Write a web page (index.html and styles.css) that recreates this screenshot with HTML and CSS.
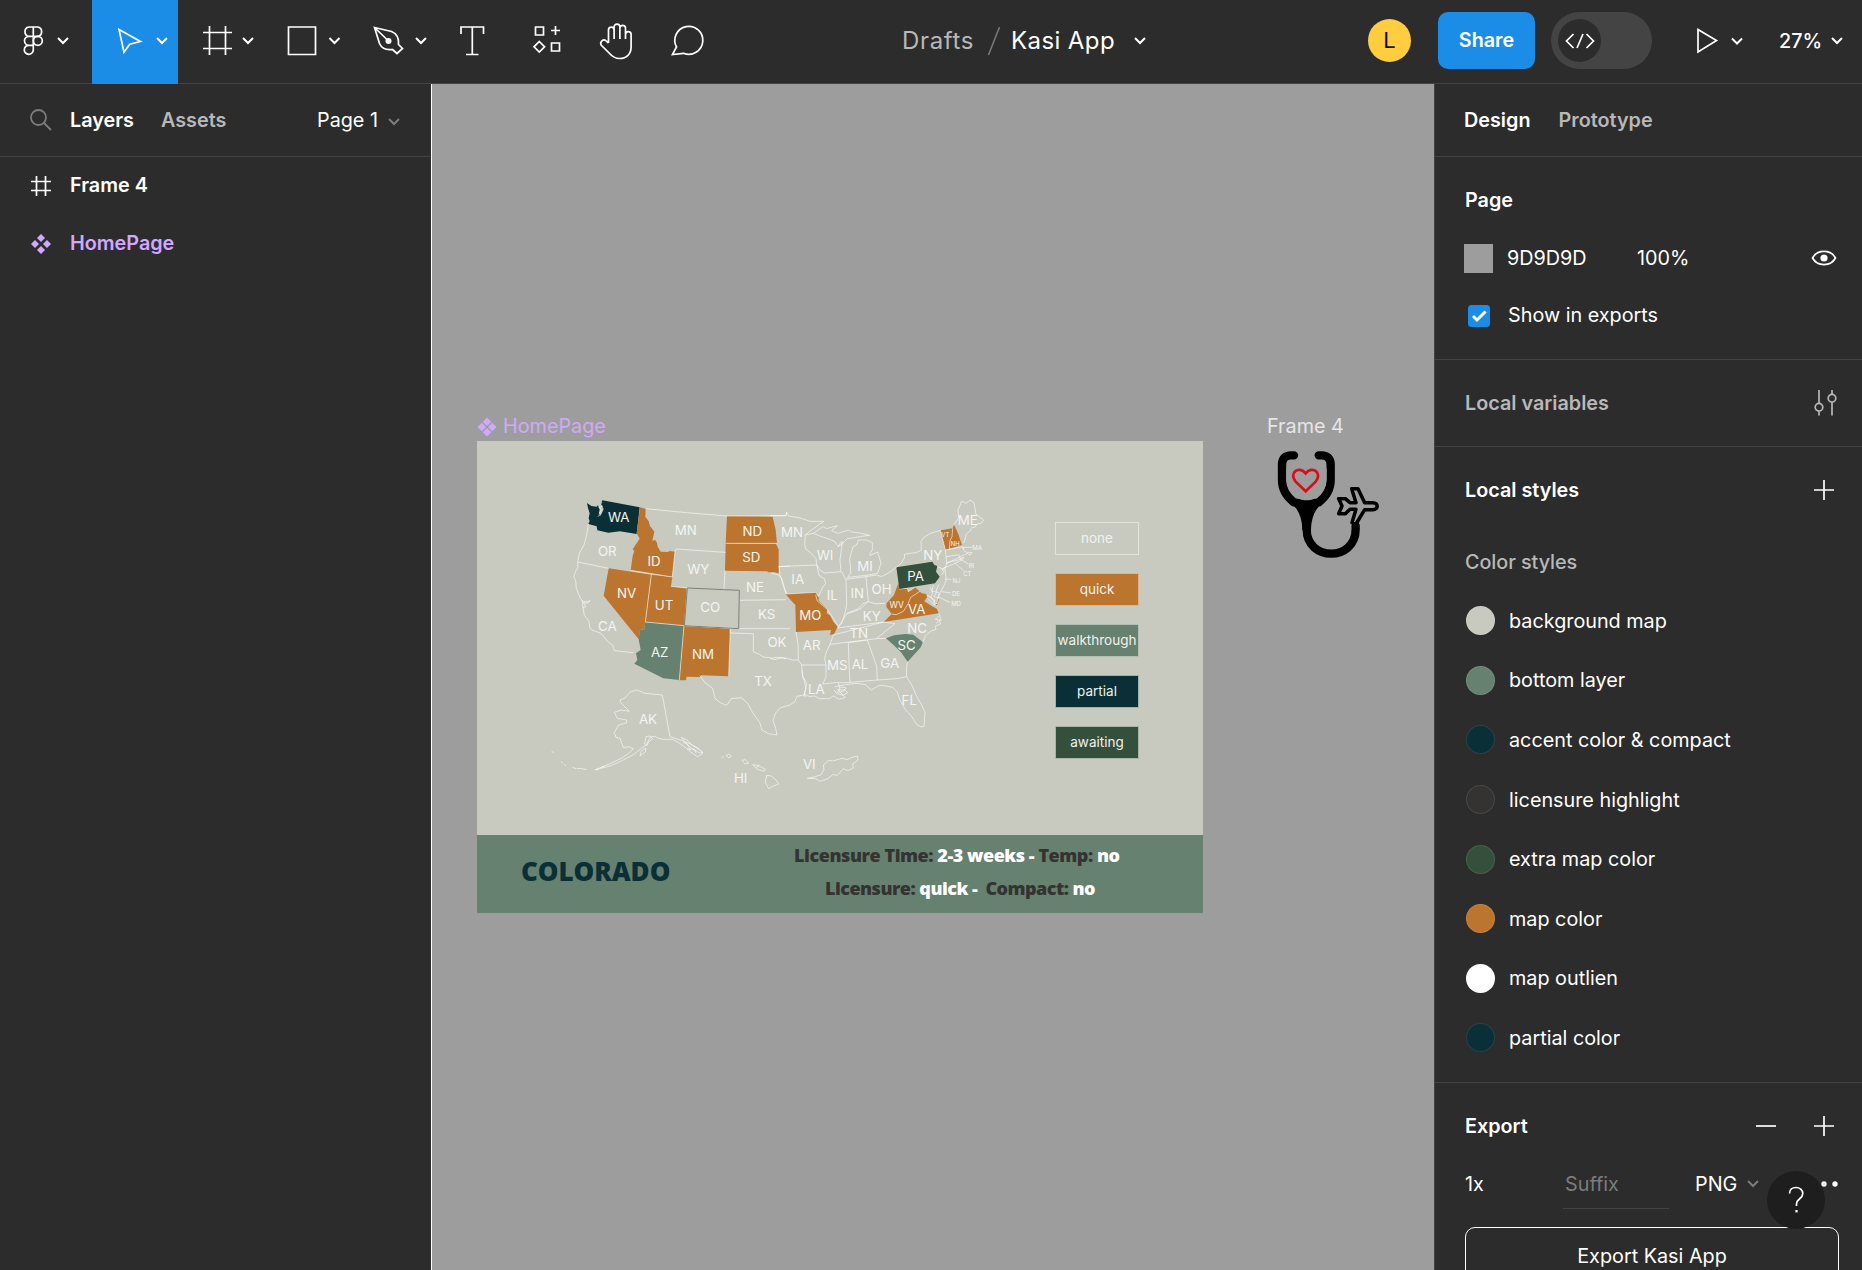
FILE: index.html
```html
<!DOCTYPE html>
<html lang="en">
<head>
<meta charset="utf-8">
<title>Kasi App</title>
<link rel="stylesheet" href="styles.css">
</head>
<body>
<div class="app">
  <header class="toolbar">
    <div class="tools">
      <svg class="tool" width="92" height="84" viewBox="0 0 92 84"><path d="M33.3 27H29a4.7 4.7 0 0 0 0 9.300h4.300zM33.300 27h4.300a4.700 4.700 0 0 1 0 9.300h-4.300zM33.300 36.300H29a4.500 4.500 0 0 0 0 9h4.300zM33.300 45.300H29a4.500 4.500 0 1 0 4.300 4.500z"/><circle cx="37.800" cy="40.800" r="4.500"/><path class="chev" d="M58 38l5 5 5-5"/></svg>
      <svg class="tool active" width="86" height="84" viewBox="92 0 86 84"><path d="M119 29.500l21.500 12-10.800 2.800-5.700 8z"/><path class="chev" d="M157 38l5 5 5-5"/></svg>
      <svg class="tool" width="86" height="84" viewBox="178 0 86 84"><path d="M209.500 26v29M225.500 26v29M203 32.500h29M203 48.500h29"/><path class="chev" d="M243 38l5 5 5-5"/></svg>
      <svg class="tool" width="86" height="84" viewBox="264 0 86 84"><path d="M288.500 27h27v27.500h-27z"/><path class="chev" d="M329.500 38l5 5 5-5"/></svg>
      <svg class="tool" width="87" height="84" viewBox="350 0 87 84"><path d="M374.500 27.500l17 4c5 2 7.500 7 7 13l4 4-5.500 5-4.500-4c-6 .8-11-1.500-13-6zM374.500 27.500l14 13.500"/><circle cx="388.500" cy="41" r="2.200" fill="#fff"/><path class="chev" d="M416 38l5 5 5-5"/></svg>
      <svg class="tool" width="72" height="84" viewBox="437 0 72 84"><path d="M461 34v-7h22.500v7M472.300 27v27.500M466 54.500h12.500"/></svg>
      <svg class="tool" width="74" height="84" viewBox="509 0 74 84"><path d="M535.500 27h8v8h-8zM551.500 43h8v8h-8zM555.500 26v9M551 30.500h9M539.300 41.500l5.300 5.300-5.300 5.300-5.300-5.300z"/></svg>
      <svg class="tool" width="68" height="84" viewBox="583 0 68 84"><path d="M608.500 43V30a2.800 2.800 0 0 1 5.600 0v9V27a2.900 2.900 0 0 1 5.800 0v12V27.500a2.900 2.900 0 0 1 5.600 0V39v-4.500a2.800 2.800 0 0 1 5.600 0V47c0 7-4.500 11.500-11.500 11.500-5 0-7.500-2-10.500-5.500l-8-8c-1.500-3 2-6.500 5-4.200l2.400 2.200"/></svg>
      <svg class="tool" width="74" height="84" viewBox="651 0 74 84"><path d="M672.500 54.500l4-7.500a14 14 0 1 1 7 6.300z"/></svg>
    </div>
    <div class="title"><span class="muted">Drafts</span><svg width="14" height="30" viewBox="0 0 14 30"><path d="M1.500 29L12.500 1" fill="none" stroke="#777" stroke-width="1.600"/></svg><span>Kasi App</span><svg class="ico" width="14" height="10" viewBox="0 0 14 10"><path class="chev" d="M2 2l5 5 5-5"/></svg></div>
    <div class="avatar">L</div>
    <div class="share">Share</div>
    <div class="toggle"><div class="knob"><svg class="ico" width="30" height="20" viewBox="0 0 30 20"><path d="M8.500 3L1.500 10l7 7M21.500 3l7 7-7 7M18 3l-6 14"/></svg></div></div>
    <svg class="ico play" width="60" height="30" viewBox="1690 26 60 30"><path d="M1698 29.500v22.500l18.500-11.500z"/><path class="chev" d="M1732 38.500l5 5 5-5"/></svg>
    <div class="zoom">27%</div>
    <svg class="ico" width="14" height="10" viewBox="0 0 14 10"><path class="chev" d="M2 2l5 5 5-5"/></svg>
  </header>

  <div class="main">
    <aside class="left">
      <div class="tabs">
        <svg class="search" width="22" height="22" viewBox="0 0 22 22"><circle cx="8.500" cy="8.500" r="7.500"/><path d="M14 14l7 7"/></svg>
        <b class="t-layers">Layers</b><b class="muted">Assets</b>
        <span class="pg">Page 1</span>
        <svg class="ico dim" width="14" height="10" viewBox="0 0 14 10"><path class="chev" d="M2 2l5 5 5-5"/></svg>
      </div>
      <div class="layer"><svg class="ico" width="22" height="22" viewBox="0 0 22 22"><path d="M6.500 1v20M15.500 1v20M1 6.500h20M1 15.500h20"/></svg><b>Frame 4</b></div>
      <div class="layer comp"><svg width="22" height="22" viewBox="-11 -11 22 22"><path d="M0-10l4 4-4 4-4-4zM0 2l4 4-4 4-4-4zM-6-4l4 4-4 4-4-4zM6-4l4 4-4 4-4-4z" fill="#d1a8ff"/></svg><b>HomePage</b></div>
    </aside>

    <main class="canvas">
      <section class="board home">
        <div class="label"><svg width="20" height="20" viewBox="-10.500 -10.500 21 21"><path d="M0-10l4.500 4.500L0-1l-4.500-4.500zM0 1l4.500 4.500L0 10l-4.500-4.500zM-5.500-4.500L-1 0l-4.500 4.500L-10 0zM5.500-4.500L10 0 5.500 4.500 1 0z" fill="#d1a8ff"/></svg><span>HomePage</span></div>
        <div class="frame">
          <div class="upper">
            <svg class="map" width="560" height="394" viewBox="477 441 560 394">
              <g class="states" transform="translate(540 480) scale(.33333)">
                <path class="navy" d="M141 69l13 9 16 2 4-4 5 12-3 17 9-4 6-14-9-15 5-11 112 21-9 80-50-8-35 4-33-7-2-12-25-7 4-8-3-9 3-15-5-16z"/>
                <path class="line" d="M186 66l-4 8 6 5-12 3 9 8-6 7 4 8-10 4"/>
                <path class="orange" d="M300 82l17 4-1 24 10 14 4 14 13 17-6 27 9-2 5 8 2 12 9 15 20 1 8-3 15 2-8 76-125-20 6-43 5-16-5-4 21-32-9-16z"/>
                <path class="orange" d="M206 265l128 19-18 142-3 22-13 2-4 28L191 347z"/>
                <path class="orange" d="M334 284l63 7-4 28 47 6-8 112-116-11z"/>
                <path class="sage" d="M316 426l116 11-14 163-48-5-87-44 9-11-4-20 14-10-6-32 4-28 13-2z"/>
                <path class="orange" d="M432 437l139 9-5 143-83-3-3 5-40-1-2 11h-20z"/>
                <path class="orange" d="M561 108l137 2 9 40 4 40H557z"/>
                <path class="orange" d="M557 190l151 2 8 16v72l-16-4-10 2-10-4-125-2z"/>
                <path class="line" d="M317 86l123 12 121 10 177-1 2-11M405 215l3-8 149 10M555 272l-3 56M206 265l-93-19 5-26 14-25 8-30 5-33M113 246l1 16-7 12-6 16 6 12 2 24 12 28 6 8 2 20 4 24 14 18 2 18 6 8 28 10 20 24 15 12 5 16 58 6M124 362l14 4 12-4-6 8-14-2 8 12-10 4M557 190h154M397 291l-125-20M334 284l-18 142 116 11-14 163M397 291l8-76M393 319l49 5M690 278l26 7 8 10 6 23 10 27M598 361l140-2M433 437l163 9h154M571 446v13l69 2v54l18 8 12 8 20 2 12 6 24-6 12 4M716 260l34-2M571 446l-5 143"/>
                <path class="co" d="M442 324l156 7-2 115-163-9z"/>
              </g>
              <g class="states" transform="translate(770 480) scale(.33333)">
                <path class="orange" d="M47 342l90-5 9 13v12l26 26-2 12 10 6 10 19 13 15-11 22-12 3 3-15-105 6-2-81-14-15z"/>
                <path class="orange" d="M385 310l3 17 24-2 3 10 20-13 20 18 14 2 2 10-8 12 22 14 15 8 6 14-165 26 24-24-16-22 1-10 22-25z"/>
                <path class="line" d="M365 402l14 2 21-10 14-22 8-20 28-18M388 327l24-2 3 10 20-13"/>
                <path class="green" d="M379 262l108-17 6 10 9 3-4 17 11 15-14 20-107 17z"/>
                <path class="orange" d="M511 151l37-6 4-11 12 26 12 35-50 15z"/>
                <path class="line" d="M548 145l-2 25-6 12-2 26"/>
                <path class="sage" d="M348 475l24-9 33-4 25 2 29 23-8 16-20 22-18 20-20-28-20-20z"/>
                <path class="orange" d="M497 374l8-18 2 2-6 18z"/>
                <path class="line" d="M0 107h48l2-10 6 11 24 4 14 3 26 9h41l-33 23-22 17-2 30 4 14 14 10 16 18 2 19-115 5M106 165l24-5 20 8 34 12 11 5 10 15 6-12 6-3-7 55 3 35-50 4-13-9-10-15M130 160l20-14 10-6 10 6 32-9-17 15 20 8 30-10 10 6 30 4 24 6-25 3-20 4-22 3-12 12-15 12M232 293l10-14-1-20-2-24 10-34 12-8 4-13 24 0 18 8 0 22-8 12 2 4 22-10 10 34-10 30-34 6-56 6M28 260l2 24 8 20 6 22 6 16 87-5 8 13 14-30 8-10-4-14-16-10-7-31M215 275l13 25 2 75-5 25-10 30-10 10-15-25-18-27-30-25-5-18M228 298l60-8 7 75-16 6-16 16-33 13M288 290l32-5 15 5 22-12 22-16M295 365l20 6 30-1M230 402l-22 34-5 8 138-18M230 402l24-8 20-9 20-20M180 493l140-17 28-1M190 465l151-39 34 5-20 16-35 28M379 262l14-12 10-16 1-12 34-4 16-8-1-25 10-14 18-11 30-9 15 58 4 40-6 22-22-12M552 134l14-20-2-24 11-26 13 6 12-10 12 8 6 36 12 8 11 8-8 10-12 2-6 10-10 0-4 10-12 10-6 24-5 3M526 210l52-10 4 12 10 6 14 0-6 8-8-6-12 6-28 14-24 10M528 230l40-6M568 226l4 14M530 250l14-6 16-2 22-10-6 8-30 14-28 12M528 260l-12 8 6 10-8 6M576 205l10-3h20M575 240l20 12M555 250l26 22M525 297l18 1M515 335l28 4M505 350l35 18M525 270l3 20 0 14-10 20-8 14-6 16-4 18M480 320l8 20-6 12 12 8-2 14 10-4M490 316l-4 18 14 2-8 14 12 4M506 314l-8 20 10 6-4 14M470 345l14 8 10 16M474 356l20 20M506 400l8 20-6 4 4 8-16 6 2 10-16 6-16 14-8 20M506 408l-10 10 14 2-12 10M78 456l6 34 1 50 10 15h73l-4-20 4-16 12-26 10-28M0 536l20-4 28 2 18 6 19 0M95 555l3 35 6 16 4 19-4 14 1 12M168 555l0 36-10 21 47-5 4 18M235 488l2 60 3 60-35 0M235 488l57-8 20 56 8 24 2 40-82 7M413 545l-4 20 1 25-30 6-58 4M410 590l15 25 15 34 14 24 11 24-3 43-12 0-10-7-14-22-21-24-15-27-8-24-14-14-30-6-14 2-20 12-18-16-24-4-36 4-32 6M205 630l20 0 8 8-14 8-20-6-6-10"/>
              </g>
              <g class="states" transform="translate(530 670) scale(.33333)">
                <path class="line" d="M510 17l16 22 22 16 7 30 14 12 21 9 14-20 31-3 20 20 10 20 25 36 5 20 20 12 26 4-4-20-8-24 8-22 12-14 10-4 20-6 16-10 6-16 25-5 12 6 16-2 14 8 30 0 12-8 18 10 18-6-24-24 8 0M815 0l4 20 11 20-8 38M928 58l6-8 14 4-10 12-18 0M320 60L345 70 397 75 420 200 445 208 462 214 482 222 500 234 518 246 514 254 502 260 482 246 466 232 446 218 428 208 400 208 385 205 375 199 361 201 350 223 330 238 310 254 270 275 240 288 197 299 240 281 276 264 296 250 310 236 296 230 280 233 270 205 258 202 253 188 265 166 290 158 290 150 262 145 253 127 275 120 298 124 272 98 270 90 285 84 300 66zM454 202l20 10 10 12 20 10 14 14-10 0-20-10-22-20zM460 218l10 2 12 20-10-4M484 236l10 2 4 12M348 200l12-2 8 8-12 10-6 12-6-6zM330 258l4-16 14-8-2 12zM65 245l6 2M94 274l4 6M103 283l6 5M128 292l10 4M140 296l10-1 20 4M195 299l10 1M212 294l12-6M575 263l6-3M588 257l8-5 8 6-6 6zM636 271l10-2 10 10-12 2zM668 284l20 4 18 10-4 6-20-6zM678 294l10-8M710 316l14 2 14 12 8 12-16 6-14 8-10-20zM832 325l20-4 20-6 10-16-2-14 16-14 12 2 28-8 16 4 18-8 12-3 2 12-16 12 2 12-16 8-14-6-18 20-14-2-14 12-24 8-14-8z"/>
              </g>
              <g class="names">
                <text x="618.700" y="521.500">WA</text><text x="685.700" y="535">MN</text><text x="607.300" y="555.500">OR</text><text x="654" y="565.500">ID</text><text x="698.300" y="573.500">WY</text><text x="752.300" y="536">ND</text><text x="751.300" y="561.500">SD</text><text x="755" y="591.500">NE</text><text x="626.500" y="597.500">NV</text><text x="664" y="609.500">UT</text><text x="710.300" y="612">CO</text><text x="766.700" y="618.500">KS</text><text x="607.300" y="630.500">CA</text><text x="659.700" y="656.500">AZ</text><text x="703" y="659">NM</text><text x="777" y="647">OK</text><text x="763" y="685.500">TX</text>
                <text x="792" y="536.500">MN</text><text x="825" y="560">WI</text><text x="797.700" y="583.500">IA</text><text x="865" y="570.500">MI</text><text x="832.300" y="600">IL</text><text x="857.300" y="598">IN</text><text x="881.500" y="594">OH</text><text x="932.700" y="559.500">NY</text><text x="967.700" y="525">ME</text><text x="915.700" y="580.500">PA</text><text x="916.700" y="613.500">VA</text><text x="871.700" y="621">KY</text><text x="810.300" y="620">MO</text><text x="858.700" y="638">TN</text><text x="917" y="633">NC</text><text x="906.700" y="649.500">SC</text><text x="811.700" y="650">AR</text><text x="837.300" y="670">MS</text><text x="860" y="668.500">AL</text><text x="889.700" y="667.500">GA</text><text x="816.300" y="693.500">LA</text><text x="909.300" y="704.500">FL</text>
                <text x="648" y="724">AK</text><text x="740.700" y="782.500">HI</text><text x="809.300" y="769">VI</text>
                <g class="small"><text x="945.300" y="536.500">VT</text><text x="955.300" y="545.500">NH</text><text x="977" y="550">MA</text><text x="971.500" y="567.500">RI</text><text x="967.300" y="575.500">CT</text><text x="956.500" y="582.500">NJ</text><text x="956" y="595.500">DE</text><text x="956" y="605.500">MD</text></g>
                <text class="wv" x="896.700" y="608">WV</text>
              </g>
            </svg>
            <div class="legend"><div>none</div><div class="b-orange">quick</div><div class="b-sage">walkthrough</div><div class="b-navy">partial</div><div class="b-green">awaiting</div></div>
          </div>
          <div class="info">
            <div class="state">COLORADO</div>
            <div class="facts">
              <div class="f1">Licensure Time: <i>2-3 weeks - </i>Temp: <i>no</i></div>
              <div class="f2">Licensure: <i>quick -&nbsp; </i>Compact: <i>no</i></div>
            </div>
          </div>
        </div>
      </section>
      <section class="board logo">
        <div class="label"><span>Frame 4</span></div>
        <svg width="112" height="118" viewBox="1268 441 112 118">
          <g transform="translate(1030 400) scale(.33333)" fill="none" stroke="#000" stroke-linecap="round" stroke-linejoin="round">
            <path stroke-width="25" d="M792 166h-9c-17 0-27 10-27 28v46c0 30 14 50 36 67l37 6 37-6c22-17 36-37 36-67v-46c0-18-10-28-27-28h-9M830 330v58c0 97 147 97 147 0v-10"/>
            <path fill="#000" stroke="none" d="M770 296q47 34 47 94h26q0-60 47-94-61 34-120 0z"/>
            <path fill="#9d9d9d" stroke="none" d="M769 235c2 88 119 88 121 0v-30H769z"/>
            <path stroke="#dd0b18" stroke-width="8" stroke-linejoin="miter" d="M827 274l-30-29c-22-26 10-50 30-25 20-25 52-1 30 25z"/>
            <path fill="#9d9d9d" stroke-width="10.500" d="M965 266h19l20 42h25c17 0 17 21 0 21h-25l-26 43-12-4 12-40h-18l-14 13h-20l10-23-10-22h20l14 12h18z"/>
          </g>
        </svg>
      </section>
    </main>

    <aside class="right">
      <div class="tabs"><b>Design</b><b class="muted">Prototype</b></div>
      <div class="sec page">
        <div class="row r58"><b>Page</b></div>
        <div class="row r58"><span class="sw"></span><span class="hex">9D9D9D</span><span>100%</span><svg class="ico end eye" width="26" height="18" viewBox="0 0 26 18"><path d="M1.500 9c5-8.800 18-8.800 23 0-5 8.800-18 8.800-23 0z"/><circle cx="13" cy="9" r="3.600" fill="#fff" stroke="none"/></svg></div>
        <div class="row r58 show"><svg class="check" width="22" height="22" viewBox="0 0 22 22"><rect width="22" height="22" rx="3.500" fill="#1c8de6"/><path d="M5 11l4 4 8.500-8.500" fill="none" stroke="#fff" stroke-width="3"/></svg><span>Show in exports</span></div>
      </div>
      <div class="sec vars"><div class="row"><b class="muted">Local variables</b><svg class="ico end sliders" width="24" height="26" viewBox="0 0 24 26"><path d="M5 0v13.500M5 21v4.500M18 0v4.500M18 12v13.500"/><circle cx="5" cy="17.200" r="3.800"/><circle cx="18" cy="8.200" r="3.800"/></svg></div></div>
      <div class="sec styles">
        <div class="row head"><b>Local styles</b><svg class="ico end plus" width="20" height="20" viewBox="0 0 20 20"><path d="M10 0v20M0 10h20"/></svg></div>
        <div class="row sub">Color styles</div>
        <div class="row c"><span class="dot c1"></span>background map</div>
        <div class="row c"><span class="dot c2"></span>bottom layer</div>
        <div class="row c"><span class="dot c3"></span>accent color &amp; compact</div>
        <div class="row c"><span class="dot c4"></span>licensure highlight</div>
        <div class="row c"><span class="dot c5"></span>extra map color</div>
        <div class="row c"><span class="dot c6"></span>map color</div>
        <div class="row c"><span class="dot c7"></span>map outlien</div>
        <div class="row c"><span class="dot c3"></span>partial color</div>
      </div>
      <div class="export">
        <div class="row head"><b>Export</b><svg class="ico end minus" width="20" height="20" viewBox="0 0 20 20"><path d="M0 10h20"/></svg><svg class="ico plus" width="20" height="20" viewBox="0 0 20 20"><path d="M10 0v20M0 10h20"/></svg></div>
        <div class="row opts"><span class="x1">1x</span><span class="suffix">Suffix</span><span class="png">PNG</span><svg class="ico dim" width="14" height="10" viewBox="0 0 14 10"><path class="chev" d="M2 2l5 5 5-5"/></svg><svg class="dots" width="20" height="6" viewBox="0 0 20 6"><circle cx="4" cy="3" r="2.700" fill="#fff"/><circle cx="15" cy="3" r="2.700" fill="#fff"/></svg></div>
        <div class="btn">Export Kasi App</div>
        <div class="help"><svg class="ico" width="20" height="28" viewBox="0 0 20 28"><path d="M3.500 7.500C3.500 3.500 6.500 1.500 10 1.500s6.800 2.300 6.800 6c0 5.500-6.300 5-6.300 10.500v2"/><path d="M10.500 24v2.400" stroke-width="2.200"/></svg></div>
      </div>
    </aside>
  </div>
</div>
</body>
</html>
```
FILE: styles.css
```css
* { box-sizing: border-box; }
body { margin: 0; background: #2c2c2c; color: #fff; font: 400 19.8px/28px Inter, "Liberation Sans", sans-serif; letter-spacing: 0; }
b { font-weight: 600; }
i { font-style: normal; }
svg { display: block; flex: none; }
.app { width: 1862px; height: 1270px; display: flex; flex-direction: column; overflow: hidden; }
.muted { color: #b8b8b8; }

.toolbar { height: 84px; flex: none; display: flex; align-items: center; border-bottom: 1px solid #444; padding-bottom: 2px; }
.tools { display: flex; align-self: flex-start; height: 84px; width: 725px; flex: none; }
.tool, .ico { fill: none; stroke: #fff; stroke-width: 1.7; }
.tool.active { background: #1c8de6; }
.chev { stroke-width: 2; }
.dim { stroke: #7c7c7c; }
.title { display: flex; align-items: center; margin-left: 177px; width: 466px; font-size: 24px; letter-spacing: .3px; }
.title .muted { width: 85px; letter-spacing: .65px; }
.title span:nth-of-type(2) { width: 109px; margin-left: 10px; white-space: nowrap; letter-spacing: .4px; }
.title .ico { margin-left: 13px; }
.avatar { width: 43px; height: 43px; border-radius: 50%; background: #ffcd3f; color: #111; text-align: center; line-height: 43px; font-size: 22px; }
.share { margin-left: 27px; width: 97px; height: 57px; border-radius: 10px; background: #1c8de6; font-weight: 600; text-align: center; line-height: 57px; }
.toggle { margin-left: 16px; width: 101px; height: 57px; border-radius: 29px; background: #444; padding: 7px; }
.knob { width: 43px; height: 43px; border-radius: 50%; background: #2c2c2c; display: flex; align-items: center; justify-content: center; }
.play { margin-left: 38px; }
.zoom { margin-left: 29px; width: 51px; font-weight: 500; }

.main { flex: 1; display: flex; min-height: 0; }
.tabs { height: 73px; display: flex; align-items: center; border-bottom: 1px solid #444; }
.left { width: 432px; flex: none; border-right: 1px solid #fff; }
.search { fill: none; stroke: #7c7c7c; stroke-width: 1.8; margin-left: 30px; }
.t-layers { margin-left: 18px; width: 91px; }
.pg { margin-left: auto; width: 70px; white-space: nowrap; }
.left .tabs .ico { margin: 3px 30px 0 0; }
.layer { display: flex; align-items: center; height: 58px; padding-left: 30px; gap: 18px; }
.layer b { padding-bottom: 2px; }
.comp { color: #d1a8ff; }

.canvas { flex: 1; background: #9d9d9d; display: flex; padding: 328px 0 0 45px; }
.label { height: 29px; line-height: 28px; display: flex; align-items: center; gap: 6px; white-space: nowrap; }
.label span { padding-bottom: 2px; }
.home { width: 726px; flex: none; }
.home .label { color: #cfaaf8; }
.logo { margin-left: 64px; width: 112px; }
.logo .label { color: #e6e6e6; }
.logo svg { margin-left: 1px; }
.frame { height: 472px; display: flex; flex-direction: column; }
.upper { height: 394px; background: #c8cac0; display: flex; }
.legend { margin: 80.500px 0 0 18px; width: 84px; display: flex; flex-direction: column; gap: 18px; font-size: 13.500px; color: #f0f1ed; letter-spacing: 0; }
.legend div { height: 33px; border: 1px solid #e2e4de; text-align: center; line-height: 31px; }
.legend .b-orange { background: #bb752e; border-color: #dcb489; }
.legend .b-sage { background: #66816f; border-color: #b4c0b5; }
.legend .b-navy { background: #0a2f36; border-color: #a3b0ae; }
.legend .b-green { background: #344f3c; border-color: #a9b3a8; }
.info { height: 78px; background: #66816f; display: flex; font-family: "Open Sans", "Noto Sans", sans-serif; font-weight: 800; white-space: nowrap; }
.state { color: #0a2f36; width: 230px; padding-left: 44px; font-size: 26px; line-height: 73px; letter-spacing: -.05px; }
.facts { width: 496px; padding-top: 7px; color: #343331; font-size: 18px; letter-spacing: -.44px; }
.facts i { color: #fff; }
.f1, .f2 { height: 33px; line-height: 27px; }
.f1 { padding-left: 87px; }
.f2 { padding-left: 118px; letter-spacing: -.52px; }

.navy { fill: #0a2f36; }
.orange { fill: #bb752e; }
.sage { fill: #66816f; }
.green { fill: #344f3c; }
.line { fill: none; stroke: #fff; stroke-opacity: .58; stroke-width: 3; stroke-linejoin: round; }
.co { fill: none; stroke: #7d7f79; stroke-width: 3; }
.names { fill: #f4f5f2; font-size: 13.300px; text-anchor: middle; letter-spacing: 0; }
.names .small { font-size: 6px; }
.names .wv { font-size: 8.500px; }

.right { width: 428px; flex: none; border-left: 1px solid #444; }
.right .tabs { padding-left: 29px; gap: 28px; }
.row { display: flex; align-items: center; padding-left: 30px; }
.sec { border-bottom: 1px solid #444; }
.r58 { height: 58px; }
.page { height: 203px; padding-top: 14px; }
.show span { padding-bottom: 2px; }
.sw { width: 29px; height: 29px; background: #9d9d9d; margin: 0 14px 0 -1px; }
.hex { width: 130px; }
.end { margin-left: auto; }
.eye { margin-right: 25px; }
.check { margin: 0 18px 0 3px; }
.vars { height: 87px; }
.vars .row { height: 86px; }
.sliders { margin-right: 24px; stroke: #b8b8b8; }
.plus { margin-right: 28px; }
.styles { height: 636px; }
.styles .head { height: 86px; }
.sub { height: 58px; color: #b8b8b8; font-weight: 500; letter-spacing: -.05px; }
.c { height: 59.600px; }
.dot { width: 29px; height: 29px; border-radius: 50%; margin: 0 14px 0 1px; border: 1px solid rgba(255, 255, 255, .1); }
.c1 { background: #c8cac0; }
.c2 { background: #66816f; }
.c3 { background: #0a2f36; }
.c4 { background: #343331; }
.c5 { background: #344f3c; }
.c6 { background: #bb752e; }
.c7 { background: #fff; }
.export { position: relative; }
.export .head { height: 86px; }
.minus { margin-right: 38px; }
.opts { height: 32px; margin-top: -1px; }
.x1 { width: 98px; }
.suffix { width: 106px; height: 50px; line-height: 50px; padding-left: 2px; color: #7c7c7c; border-bottom: 1px solid #444; }
.png { margin: 0 10px 0 26px; width: 41px; }
.dots { margin-left: 60px; }
.btn { margin: 27px 0 0 30px; width: 374px; height: 58px; border: 1.500px solid #fff; border-radius: 10px; text-align: center; line-height: 56px; }
.help { position: absolute; left: 332px; top: 88px; width: 58px; height: 58px; border-radius: 50%; background: #1e1e1e; display: flex; align-items: center; justify-content: center; }
```
